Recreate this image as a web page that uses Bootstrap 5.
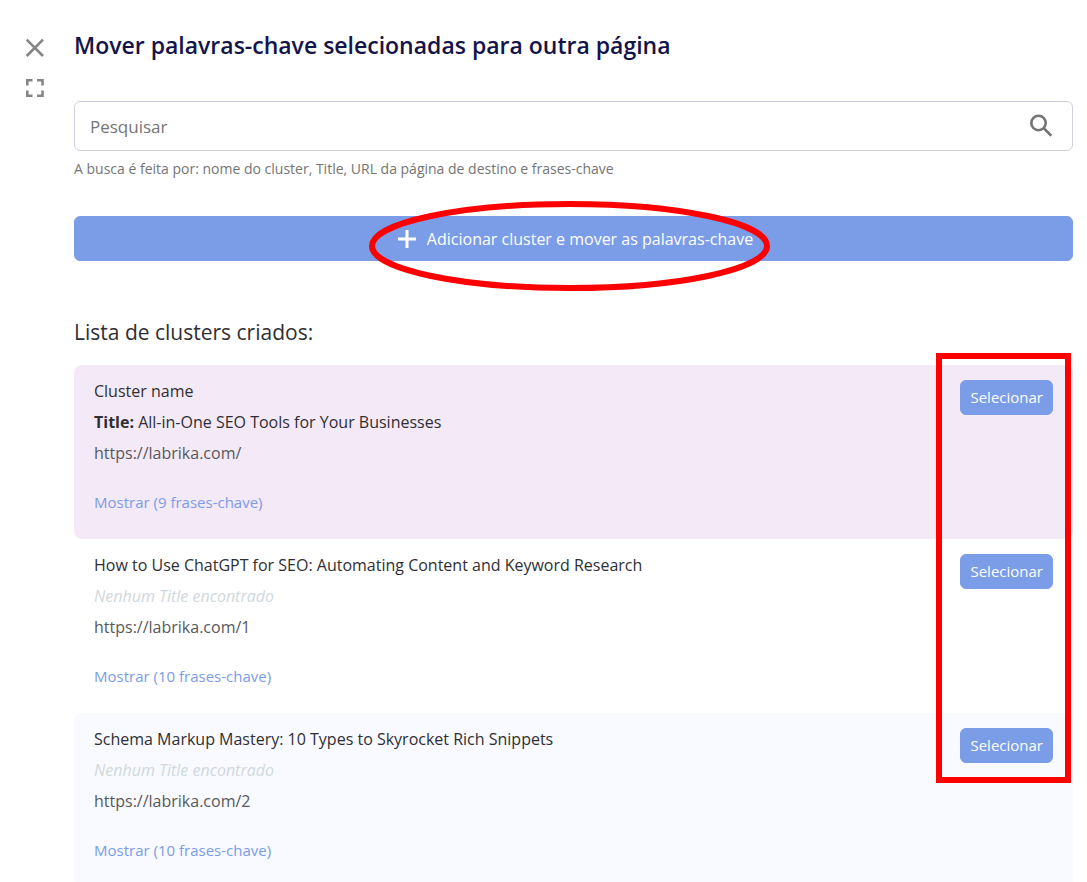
<!DOCTYPE html>
<html lang="pt">
<head>
<meta charset="utf-8">
<meta name="viewport" content="width=device-width, initial-scale=1">
<title>Mover palavras-chave</title>
<link href="https://cdn.jsdelivr.net/npm/bootstrap@5.3.0/dist/css/bootstrap.min.css" rel="stylesheet">
<style>
  body { font-family: "Open Sans", "Noto Sans", sans-serif; font-size: 16px; color: #2f2f33; background: #fff; }
  .side-rail { width: 74px; padding: 38px 0 0 25px; gap: 20px; }
  .side-rail svg, .search-field svg { display: block; }
  .panel-body { padding: 27px 14px 0 0; }
  .panel-title { font-size: 23px; line-height: 36px; font-weight: 600; color: #14144b; margin-bottom: 38px; }
  .search-field .form-control { height: 50px; padding: 0 60px 0 15px; font-size: 17px; border-color: #d0cfe0; border-radius: 6px; }
  .search-field .form-control::placeholder { color: #757575; opacity: 1; }
  .search-go { right: 20px; top: 13px; }
  .search-help { font-size: 14px; line-height: 20px; color: #757575; margin: 8px 0 37px; }
  .btn-soft { --bs-btn-color: #fff; --bs-btn-bg: #7b9ce6; --bs-btn-border-color: #7b9ce6; --bs-btn-hover-color: #fff; --bs-btn-hover-bg: #6789d8; --bs-btn-hover-border-color: #6789d8; --bs-btn-border-radius: 6px; }
  .btn-add { height: 45px; padding: 0 0 0 4px; --bs-btn-font-size: 16px; }
  .btn-add .btn-label { gap: 11px; }
  .btn-pick { height: 35px; padding: 0 9px; --bs-btn-font-size: 15px; }
  .list-title { font-size: 21px; line-height: 32px; font-weight: 400; margin: 55px 0 17px; }
  .cluster { padding: 11px 20px 25px; line-height: 31px; border-radius: 8px; }
  .cluster:nth-child(odd) { background: #f8faff; }
  .cluster.current { background: #f4e9f7; }
  .cluster p { margin: 0; }
  .no-title { color: #d0d8dc; font-style: italic; }
  .cluster-url { color: #58585c; }
  .cluster-more { display: inline-block; margin-top: 21px; font-size: 15px; line-height: 24px; color: #7b9ce6; text-decoration: none; vertical-align: top; }
  .cluster .btn-pick { margin-top: 4px; }
  .ring { left: -29px; top: -26px; width: 401px; height: 90px; }
  .frame { right: 2px; top: -12px; width: 135px; height: 430px; border: 6px solid #f00; }
  .ring, .frame { pointer-events: none; }
</style>
</head>
<body>
<div class="d-flex vh-100 overflow-hidden">
  <aside class="side-rail d-flex flex-column flex-shrink-0">
    <button type="button" class="btn p-0 border-0 align-self-start" aria-label="Fechar">
      <svg width="20" height="20" viewBox="0 0 20 20" fill="none" stroke="#858585" stroke-width="2.6"><path d="M1.7 1.7 18 18M18 1.7 1.7 18"/></svg>
    </button>
    <button type="button" class="btn p-0 border-0 align-self-start" aria-label="Tela cheia">
      <svg width="20" height="20" viewBox="0 0 20 20" fill="none" stroke="#858585" stroke-width="2.6"><path d="M2.3 7.5V2.3h5.2M12 2.3h5.5v5.2M17.500 12.500v5.200H12M7.500 17.700H2.300v-5.200"/></svg>
    </button>
  </aside>
  <main class="panel-body flex-grow-1">
    <h1 class="panel-title">Mover palavras-chave selecionadas para outra página</h1>
    <form role="search">
      <div class="search-field position-relative">
        <input type="search" id="busca" class="form-control" placeholder="Pesquisar" aria-label="Pesquisar" aria-describedby="busca-ajuda">
        <button type="button" class="search-go btn p-0 border-0 position-absolute" aria-label="Buscar">
          <svg width="24" height="24" viewBox="0 0 24 24" fill="none" stroke="#757575" stroke-width="2.6"><circle cx="9.500" cy="9" r="7.200"/><path d="M14.800 14.300 22.300 21.700"/></svg>
        </button>
      </div>
      <p id="busca-ajuda" class="search-help">A busca é feita por: nome do cluster, Title, URL da página de destino e frases-chave</p>
    </form>
    <button type="button" class="btn btn-soft btn-add w-100 d-flex align-items-center justify-content-center">
      <span class="btn-label position-relative d-inline-flex align-items-center">
        <svg width="18" height="18" viewBox="0 0 18 18" stroke="#fff" stroke-width="3"><path d="M9 0v18M0 9h18"/></svg>
        <span>Adicionar cluster e mover as palavras-chave</span>
        <svg class="ring position-absolute" viewBox="0 0 401 90" fill="none" stroke="#f00" stroke-width="6" aria-hidden="true"><ellipse cx="200.500" cy="45" rx="197.500" ry="42"/></svg>
      </span>
    </button>
    <h2 class="list-title">Lista de clusters criados:</h2>
    <div class="position-relative">
      <ul class="list-unstyled mb-0">
        <li class="cluster current d-flex justify-content-between align-items-start">
          <div>
            <p>Cluster name</p>
            <p><strong>Title:</strong> All-in-One SEO Tools for Your Businesses</p>
            <p class="cluster-url">https://labrika.com/</p>
            <a class="cluster-more" href="#">Mostrar (9 frases-chave)</a>
          </div>
          <button type="button" class="btn btn-soft btn-pick">Selecionar</button>
        </li>
        <li class="cluster d-flex justify-content-between align-items-start">
          <div>
            <p>How to Use ChatGPT for SEO: Automating Content and Keyword Research</p>
            <p class="no-title">Nenhum Title encontrado</p>
            <p class="cluster-url">https://labrika.com/1</p>
            <a class="cluster-more" href="#">Mostrar (10 frases-chave)</a>
          </div>
          <button type="button" class="btn btn-soft btn-pick">Selecionar</button>
        </li>
        <li class="cluster d-flex justify-content-between align-items-start">
          <div>
            <p>Schema Markup Mastery: 10 Types to Skyrocket Rich Snippets</p>
            <p class="no-title">Nenhum Title encontrado</p>
            <p class="cluster-url">https://labrika.com/2</p>
            <a class="cluster-more" href="#">Mostrar (10 frases-chave)</a>
          </div>
          <button type="button" class="btn btn-soft btn-pick">Selecionar</button>
        </li>
      </ul>
      <div class="frame position-absolute" aria-hidden="true"></div>
    </div>
  </main>
</div>
<script src="https://cdn.jsdelivr.net/npm/bootstrap@5.3.0/dist/js/bootstrap.bundle.min.js"></script>
</body>
</html>
